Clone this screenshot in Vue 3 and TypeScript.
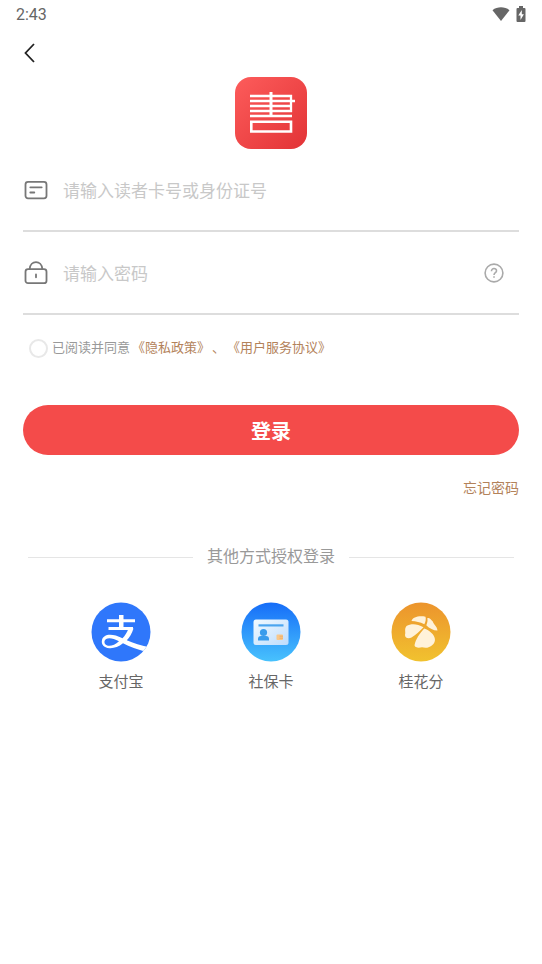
<script setup lang="ts">
import { ref } from 'vue'

type Provider = { id: 'alipay' | 'social' | 'osmanthus'; label: string }

const account = ref('')
const password = ref('')
const agreed = ref(false)

const providers: Provider[] = [
  { id: 'alipay', label: '支付宝' },
  { id: 'social', label: '社保卡' },
  { id: 'osmanthus', label: '桂花分' },
]
</script>

<template>
  <div class="page">
    <div class="status">
      <span>2:43</span>
      <div class="status-icons">
        <svg width="18" height="14" viewBox="0 0 18 14" aria-hidden="true">
          <path d="M.5 3.2C5.300-.6 12.700-.6 17.500 3.200L9 14Z" fill="#666" />
        </svg>
        <svg width="10" height="16" viewBox="0 0 10 16" aria-hidden="true">
          <path d="M3 0h4v2h1.500q1 0 1 1v12q0 1-1 1h-7q-1 0-1-1V3q0-1 1-1H3Z" fill="#666" />
          <path d="M5.800 4 2.300 9.500H4.500V14L7.900 8.300H5.800Z" fill="#fff" />
        </svg>
      </div>
    </div>

    <header class="nav">
      <button class="icon-button" type="button" aria-label="返回">
        <svg width="14" height="20" viewBox="0 0 14 20" aria-hidden="true">
          <path d="M11 1 2.500 10 11 19" fill="none" stroke="#222" stroke-width="1.800" />
        </svg>
      </button>
    </header>

    <main class="content">
      <svg class="logo" width="72" height="72" viewBox="0 0 72 72" aria-hidden="true">
        <defs>
          <linearGradient id="logo-bg" x1="0" y1="0" x2="1" y2="1">
            <stop offset="0" stop-color="#fd5c5b" />
            <stop offset="1" stop-color="#e23336" />
          </linearGradient>
        </defs>
        <rect width="72" height="72" rx="16" fill="url(#logo-bg)" />
        <g fill="none" stroke="#fff" stroke-width="2.300">
          <path d="M15 19H56V34H15M15 24H60M15 29H56M15 39H57" />
          <path d="M36 15V39" stroke-width="3" />
          <path d="M16.300 44.800H56V54.500H16.300Z" stroke-width="2.600" />
        </g>
      </svg>

      <form @submit.prevent>
        <div class="field">
          <label for="account" aria-label="读者卡号或身份证号">
            <svg width="24" height="24" viewBox="0 0 24 24" fill="none" stroke="#777" stroke-width="1.800" stroke-linecap="round" aria-hidden="true">
              <rect x="1.500" y="3.900" width="21" height="16.400" rx="2.500" />
              <path d="M6.300 9.300H17.700M6.300 14.500H10.300" />
            </svg>
          </label>
          <input id="account" v-model="account" type="text" placeholder="请输入读者卡号或身份证号" />
        </div>
        <div class="field">
          <label for="password" aria-label="密码">
            <svg width="24" height="24" viewBox="0 0 24 24" fill="none" stroke="#777" stroke-width="1.800" stroke-linecap="round" aria-hidden="true">
              <rect x="1.500" y="8.200" width="21" height="14" rx="2.500" />
              <path d="M5.700 8C6.100-1.200 17.900-1.200 18.300 8M12 13.500V16.300" />
            </svg>
          </label>
          <input id="password" v-model="password" type="password" placeholder="请输入密码" />
          <button class="icon-button" type="button" aria-label="密码帮助">
            <svg width="20" height="20" viewBox="0 0 20 20" fill="none" stroke="#aaa" stroke-width="1.600" aria-hidden="true">
              <circle cx="10" cy="10" r="8.900" />
              <path d="M7.500 8.200C7.300 4.700 12.700 4.700 12.500 8 12.400 9.700 10 9.800 10 12" />
              <path d="M10 13.200V14.800" />
            </svg>
          </button>
        </div>

        <div class="agreement">
          <input id="agree" v-model="agreed" type="checkbox" />
          <label for="agree">已阅读并同意</label>
          <a href="#privacy">《隐私政策》</a>
          <span class="accent">、</span>
          <a href="#terms">《用户服务协议》</a>
        </div>

        <button class="submit" type="submit">登录</button>
      </form>

      <a class="forgot" href="#forgot">忘记密码</a>

      <h2 class="divider">其他方式授权登录</h2>
    </main>

    <div class="providers">
      <button v-for="p in providers" :key="p.id" class="provider" type="button">
        <svg v-if="p.id === 'alipay'" width="60" height="60" viewBox="0 0 60 60" aria-hidden="true">
          <defs>
            <clipPath id="alipay-clip"><circle cx="30" cy="30" r="29.500" /></clipPath>
          </defs>
          <g clip-path="url(#alipay-clip)">
            <rect width="60" height="60" fill="#2f77fb" />
            <path d="M16 17.300H44V20.300H16ZM28 13H32.500V26H28ZM17.500 25H42V28H17.500Z" fill="#fff" />
            <path d="M37.500 26.500H42.500C41 31.500 38.500 35.500 35.800 38.300 42 41 50 43.800 60 45.500L55.500 50C46.500 47.800 38.500 44.500 32 41.300 27.500 44.800 23 46.500 18.500 46.200 12.500 45.900 10 42 11 38 12.200 32.500 20 30.500 31.500 36.200 34 33.800 36.200 30.300 37.500 26.500ZM28 39.300C20 34.700 14.300 35.600 13.500 39.300 12.800 45 21.500 45.600 28 39.300Z" fill="#fff" fill-rule="evenodd" />
          </g>
        </svg>
        <svg v-else-if="p.id === 'social'" width="60" height="60" viewBox="0 0 60 60" aria-hidden="true">
          <defs>
            <linearGradient id="social-bg" x1="0" y1="0" x2="0" y2="1">
              <stop offset="0" stop-color="#166df8" />
              <stop offset="1" stop-color="#48c2fd" />
            </linearGradient>
            <linearGradient id="social-card" x1="0" y1="0" x2="1" y2="1">
              <stop offset="0" stop-color="#f2faff" />
              <stop offset="1" stop-color="#bddcfc" />
            </linearGradient>
          </defs>
          <circle cx="30" cy="30" r="29.500" fill="url(#social-bg)" />
          <rect x="12.500" y="17.500" width="35" height="25.500" rx="2.500" fill="url(#social-card)" />
          <rect x="17.500" y="22.300" width="25" height="2.200" fill="#4ba5ef" />
          <circle cx="22.500" cy="30.500" r="3.600" fill="#399cec" />
          <path d="M17 38.500V37Q17 34 20 34H25Q28 34 28 37V38.500Z" fill="#399cec" />
          <rect x="35.500" y="32.500" width="6.500" height="5.500" rx="1" fill="#f8c78a" />
          <path d="M38.500 34.200H42M38.500 36.200H42" stroke="#edae69" />
        </svg>
        <svg v-else width="60" height="60" viewBox="0 0 60 60" aria-hidden="true">
          <defs>
            <linearGradient id="flower-bg" x1="0" y1="0" x2="0" y2="1">
              <stop offset="0" stop-color="#ec942d" />
              <stop offset="1" stop-color="#f1c22f" />
            </linearGradient>
          </defs>
          <circle cx="30" cy="30" r="29.500" fill="url(#flower-bg)" />
          <g fill="#fff2d9">
            <path d="M20.500 19C22 15 27.500 13.600 34.500 14.700 35.200 17 34.600 20 33.300 22.200 29 20 25 19.300 20.500 19Z" />
            <path d="M36.300 16.200C38 15.300 39.700 17 41.800 19.500 42.500 22.500 46 24 46.500 28.500 43 28.700 38.500 26.500 35.300 23.200 36.500 20.500 36.800 18.500 36.300 16.200Z" />
            <path d="M32.500 25.300C26 21.500 20 21.500 15.500 24 13 27 15 30 14 33 14 36.500 18 37 20.500 35.500 25 33 29 29 32.500 25.300Z" />
            <path d="M33.200 26.500C28.500 32 24.700 37 23.500 43.300 24 46 28 46 31 45.300 34 46 38 46.500 42.200 42.200 45.300 39 44.200 34.500 40.500 31 38.300 28.800 36 27.200 33.200 26.500Z" />
          </g>
        </svg>
        <span>{{ p.label }}</span>
      </button>
    </div>
  </div>
</template>

<style>
body {
  margin: 0;
  background: #fff;
}
</style>

<style scoped>
.page {
  font-family: Roboto, "Noto Sans CJK SC", sans-serif;
  color: #666;
}

button,
input {
  font-family: inherit;
}

button {
  border: 0;
  padding: 0;
  background: none;
  cursor: pointer;
}

a {
  color: #b3825a;
  text-decoration: none;
}

svg {
  display: block;
  flex: none;
}

.status {
  display: flex;
  align-items: center;
  justify-content: space-between;
  height: 28px;
  padding: 0 16px;
  font-size: 16px;
}

.status-icons {
  display: flex;
  align-items: center;
  gap: 6px;
}

.nav {
  display: flex;
  align-items: center;
  height: 49px;
  padding: 0 23px;
}

.icon-button {
  display: flex;
}

.content {
  padding: 0 23px;
}

.logo {
  margin: 0 auto;
}

.field {
  display: flex;
  align-items: center;
  gap: 15px;
  height: 81px;
  padding: 0 15px 0 1px;
  border-bottom: 2px solid #ddd;
}

.field input {
  flex: 1;
  min-width: 0;
  height: 48px;
  padding: 2px 0 0;
  border: 0;
  outline: 0;
  background: none;
  font-size: 17px;
  color: #333;
}

.field input::placeholder {
  color: #c8c8c8;
  opacity: 1;
}

.agreement {
  display: flex;
  align-items: center;
  gap: 2px;
  height: 24px;
  margin-top: 21px;
  padding-left: 6px;
  font-size: 13px;
  line-height: 20px;
}

.agreement label {
  color: #999;
}

.agreement input {
  appearance: none;
  box-sizing: border-box;
  width: 19px;
  height: 19px;
  margin: 0 2px 0 0;
  border: 2px solid #e8e8e8;
  border-radius: 50%;
}

.agreement input:checked {
  background: #f44b4a;
  border-color: #f44b4a;
}

.accent {
  color: #b3825a;
}

.submit {
  display: block;
  width: 100%;
  height: 50px;
  margin-top: 45px;
  border-radius: 25px;
  background: #f44b4a;
  color: #fff;
  font-size: 20px;
  font-weight: 700;
}

.forgot {
  display: block;
  width: fit-content;
  margin: 23px 0 0 auto;
  font-size: 14px;
  line-height: 20px;
}

.divider {
  display: flex;
  align-items: center;
  gap: 14px;
  margin: 47px 5px 0;
  font-size: 16px;
  font-weight: 400;
  line-height: 24px;
  color: #999;
}

.divider::before,
.divider::after {
  content: "";
  flex: 1;
  height: 1px;
  background: #e5e5e5;
}

.providers {
  display: grid;
  grid-template-columns: repeat(3, 1fr);
  padding: 33px 46px;
}

.provider {
  display: flex;
  flex-direction: column;
  align-items: center;
  gap: 8px;
  font-size: 15px;
  line-height: 24px;
  color: #666;
}
</style>
